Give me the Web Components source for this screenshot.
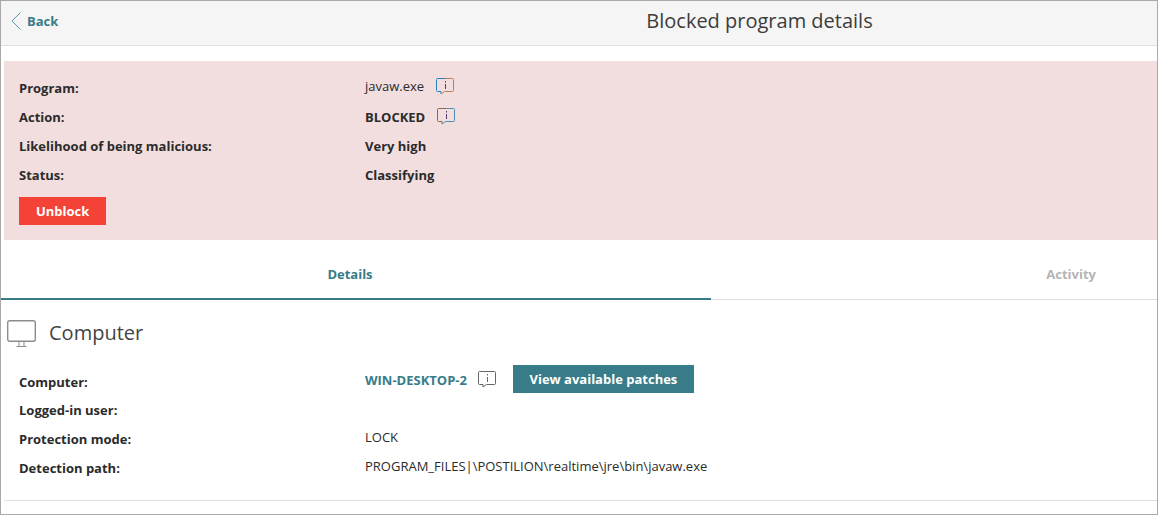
<!DOCTYPE html>
<html>
<head>
<meta charset="utf-8">
<style>
  html, body { margin: 0; background: #fff; }
  body { font-family: "Open Sans", "Liberation Sans", sans-serif; color: #2b2b2b; }
</style>
</head>
<body>
<app-frame>
  <top-bar title-text="Blocked program details"></top-bar>
  <alert-panel>
    <info-row label="Program:" raised><span>javaw.exe</span><note-icon tone="color"></note-icon></info-row>
    <info-row label="Action:" strong><span>BLOCKED</span><note-icon tone="warm"></note-icon></info-row>
    <info-row label="Likelihood of being malicious:" strong><span>Very high</span></info-row>
    <info-row label="Status:" strong><span>Classifying</span></info-row>
    <flat-button color="#f44336" wide>Unblock</flat-button>
  </alert-panel>
  <tab-strip></tab-strip>
  <computer-section></computer-section>
</app-frame>

<script>
class AppFrame extends HTMLElement {
  constructor() {
    super();
    this.attachShadow({ mode: "open" });
    this.shadowRoot.innerHTML = `
      <style>
        :host {
          display: block;
          box-sizing: border-box;
          width: 1158px;
          height: 515px;
          border: 1px solid #a9a9a9;
          overflow: hidden;
        }
      </style>
      <slot></slot>
    `;
  }
}

class TopBar extends HTMLElement {
  constructor() {
    super();
    this.attachShadow({ mode: "open" });
    this.shadowRoot.innerHTML = `
      <style>
        :host {
          display: grid;
          grid-template-columns: 361px 1fr;
          align-items: center;
          box-sizing: border-box;
          height: 45px;
          padding-bottom: 4px;
          background: #f5f5f5;
          border-bottom: 1px solid #e0e0e0;
        }
        .back {
          display: flex;
          align-items: center;
          gap: 6px;
          padding-left: 10px;
          color: #377c88;
          font-size: 13px;
          font-weight: 700;
        }
        h1 {
          margin: 0 0 2px;
          text-align: center;
          font-size: 20px;
          font-weight: 400;
          color: #3c3c3c;
        }
      </style>
      <div class="back">
        <svg width="10" height="18" viewBox="0 0 10 18"><path d="M9.500 .5 1 9l8.500 8.500" fill="none" stroke="#5b98a3"/></svg>
        <span>Back</span>
      </div>
      <h1>${this.getAttribute("title-text")}</h1>
    `;
  }
}

class AlertPanel extends HTMLElement {
  constructor() {
    super();
    this.attachShadow({ mode: "open" });
    this.shadowRoot.innerHTML = `
      <style>
        :host {
          display: block;
          box-sizing: border-box;
          height: 179px;
          margin: 15px 0 0 3px;
          padding: 12px 15px 0;
          background: #f2dede;
        }
      </style>
      <slot></slot>
    `;
  }
}

class InfoRow extends HTMLElement {
  constructor() {
    super();
    this.attachShadow({ mode: "open" });
    this.shadowRoot.innerHTML = `
      <style>
        :host {
          display: grid;
          grid-template-columns: 346px 1fr;
          grid-template-rows: 29px;
          align-items: center;
          height: 29px;
          font-size: 13px;
        }
        :host([short]) { grid-template-rows: 27px; height: 27px; }
        .label { font-weight: 700; color: #2b2b2b; }
        .value { display: flex; align-items: center; gap: 11px; }
        :host([strong]) .value { font-weight: 700; }
        :host([link]) .value { font-weight: 700; color: #377c88; }
        :host([raised]) .value { margin-bottom: 4px; }
      </style>
      <div class="label">${this.getAttribute("label")}</div>
      <div class="value"><slot></slot></div>
    `;
  }
}

class NoteIcon extends HTMLElement {
  constructor() {
    super();
    this.attachShadow({ mode: "open" });
    const tone = this.getAttribute("tone");
    const left = tone === "color" ? "#2a7fc0" : tone === "warm" ? "#8a6a50" : "#666";
    const right = tone === "color" ? "#b5835a" : tone === "warm" ? "#4d8fb5" : "#666";
    const mark = tone ? "#5a3a6a" : "#666";
    this.shadowRoot.innerHTML = `
      <style>
        :host { display: inline-flex; width: 18px; height: 17px; }
        :host([tone]) { margin-left: 1px; }
        :host([tone="color"]) { margin-top: 2px; }
      </style>
      <svg width="18" height="17" viewBox="0 0 18 17">
        <path d="M9 .5H1.500a1 1 0 0 0-1 1v11a1 1 0 0 0 1 1H5V16" fill="none" stroke="${left}"/>
        <path d="M9 .5h7.500a1 1 0 0 1 1 1v11a1 1 0 0 1-1 1H8.500L5 16" fill="none" stroke="${right}"/>
        <path d="M9.500 3v1.500M9.500 6v5" stroke="${mark}" fill="none"/>
      </svg>
    `;
  }
}

class FlatButton extends HTMLElement {
  constructor() {
    super();
    this.attachShadow({ mode: "open" });
    this.shadowRoot.innerHTML = `
      <style>
        :host {
          display: inline-flex;
          align-items: center;
          justify-content: center;
          box-sizing: border-box;
          height: 28px;
          padding: 0 16.500px;
          background: ${this.getAttribute("color")};
          color: #fff;
          font-size: 13px;
          font-weight: 700;
        }
        :host([wide]) { margin-top: 8px; padding: 0 17px; }
      </style>
      <slot></slot>
    `;
  }
}

class TabStrip extends HTMLElement {
  constructor() {
    super();
    this.attachShadow({ mode: "open" });
    this.shadowRoot.innerHTML = `
      <style>
        :host {
          display: grid;
          grid-template-columns: 710px 1fr;
          box-sizing: border-box;
          height: 60px;
          font-size: 13px;
          font-weight: 700;
        }
        div {
          display: flex;
          align-items: center;
          box-sizing: border-box;
          padding-top: 10px;
        }
        .on {
          justify-content: center;
          padding-right: 12px;
          color: #377c88;
          border-bottom: 2px solid #377c88;
        }
        .off {
          justify-content: flex-end;
          padding-top: 9px;
          padding-right: 61px;
          color: #b5b5b5;
          border-bottom: 1px solid #e0e0e0;
        }
      </style>
      <div class="on">Details</div>
      <div class="off">Activity</div>
    `;
  }
}

class ComputerSection extends HTMLElement {
  constructor() {
    super();
    this.attachShadow({ mode: "open" });
    this.shadowRoot.innerHTML = `
      <style>
        :host {
          display: block;
          box-sizing: border-box;
          height: 201px;
          margin-left: 3px;
          padding: 20px 15px 0;
          border-bottom: 1px solid #e0e0e0;
        }
        header {
          display: flex;
          align-items: center;
          gap: 13px;
          height: 28px;
          margin: 0 0 20px -12px;
          font-size: 20px;
          color: #444;
        }
        header span { margin-bottom: 3px; }
        .patches { margin: 0 0 2px 6px; }
      </style>
      <header>
        <svg width="29" height="28" viewBox="0 0 29 28">
          <rect x=".7" y=".7" width="27.600" height="20.600" rx="2" fill="none" stroke="#8c8c8c" stroke-width="1.400"/>
          <path d="M12 21.500v4.500M17 21.500v4.500M9.500 26.500h10" fill="none" stroke="#8c8c8c"/>
        </svg>
        <span>Computer</span>
      </header>
      <info-row label="Computer:" link raised short><span>WIN-DESKTOP-2</span><note-icon></note-icon><flat-button color="#377c88" class="patches">View available patches</flat-button></info-row>
      <info-row label="Logged-in user:"></info-row>
      <info-row label="Protection mode:" raised><span>LOCK</span></info-row>
      <info-row label="Detection path:" raised><span>PROGRAM_FILES|\\POSTILION\\realtime\\jre\\bin\\javaw.exe</span></info-row>
    `;
  }
}

customElements.define("app-frame", AppFrame);
customElements.define("top-bar", TopBar);
customElements.define("alert-panel", AlertPanel);
customElements.define("info-row", InfoRow);
customElements.define("note-icon", NoteIcon);
customElements.define("flat-button", FlatButton);
customElements.define("tab-strip", TabStrip);
customElements.define("computer-section", ComputerSection);
</script>
</body>
</html>
